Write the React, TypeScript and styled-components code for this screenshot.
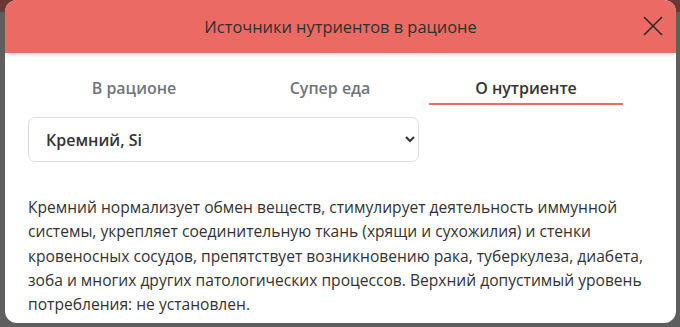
import React, { useState } from "react";
import styled, { createGlobalStyle } from "styled-components";

const GlobalStyle = createGlobalStyle`
  html, body {
    margin: 0;
    padding: 0;
    background: #5e5e5e;
    font-family: "Open Sans", "Noto Sans", sans-serif;
  }
`;

const tabs = ["В рационе", "Супер еда", "О нутриенте"];

function App() {
  const [active, setActive] = useState(2);

  return (
    <>
      <GlobalStyle />
      <Page>
        <TopBand />
        <Modal>
          <Header>
            <Title>Источники нутриентов в рационе</Title>
            <CloseButton aria-label="Закрыть">
              <svg width="22" height="22" viewBox="0 0 22 22">
                <path
                  d="M2 2 L20 20 M20 2 L2 20"
                  stroke="#2b2b2b"
                  strokeWidth="1.6"
                  fill="none"
                />
              </svg>
            </CloseButton>
          </Header>
          <Body>
            <TabRow>
              {tabs.map((t, i) => (
                <Tab key={t} $active={i === active} onClick={() => setActive(i)}>
                  {t}
                </Tab>
              ))}
            </TabRow>
            <Select defaultValue="si">
              <option value="si">Кремний, Si</option>
            </Select>
            <Description>
              Кремний нормализует обмен веществ, стимулирует деятельность иммунной
              системы, укрепляет соединительную ткань (хрящи и сухожилия) и стенки
              кровеносных сосудов, препятствует возникновению рака, туберкулеза,
              диабета, зоба и многих других патологических процессов. Верхний
              допустимый уровень потребления: не установлен.
            </Description>
          </Body>
        </Modal>
      </Page>
    </>
  );
}

export default App;

const Page = styled.div`
  position: relative;
  width: 680px;
  height: 327px;
  overflow: hidden;
  padding-left: 5px;
  box-sizing: border-box;
`;

const TopBand = styled.div`
  position: absolute;
  left: 0;
  top: 0;
  width: 100%;
  height: 12px;
  background: #6b3634;
`;

const Modal = styled.div`
  position: relative;
  width: 671px;
  height: 323px;
  background: #ffffff;
  border-radius: 12px;
  overflow: hidden;
  display: flex;
  flex-direction: column;
`;

const Header = styled.div`
  height: 53px;
  flex-shrink: 0;
  background: #ec6a64;
  display: flex;
  align-items: center;
  justify-content: center;
  position: relative;
  box-shadow: 0 2px 3px rgba(0, 0, 0, 0.12);
  z-index: 1;
`;

const Title = styled.h1`
  margin: 0;
  font-size: 16.4px;
  font-weight: 400;
  color: #2f2f2f;
`;

const CloseButton = styled.button`
  position: absolute;
  right: 12px;
  top: 15px;
  width: 22px;
  height: 22px;
  padding: 0;
  border: none;
  background: none;
  cursor: pointer;
  display: flex;
`;

const Body = styled.div`
  padding: 0 22px 0 23px;
  display: flex;
  flex-direction: column;
`;

const TabRow = styled.div`
  display: grid;
  grid-template-columns: repeat(3, 194px);
  column-gap: 2px;
  padding-left: 9px;
  margin-top: 23px;
`;

const Tab = styled.button<{ $active: boolean }>`
  height: 29px;
  border: none;
  background: none;
  padding: 0 0 4px;
  font-family: "Open Sans", sans-serif;
  font-size: 16px;
  font-weight: 600;
  color: ${(p) => (p.$active ? "#333333" : "#6f757b")};
  border-bottom: 2px solid ${(p) => (p.$active ? "#f06b66" : "transparent")};
  cursor: pointer;
`;

const Select = styled.select`
  margin-top: 12px;
  width: 391px;
  height: 45px;
  border: 1px solid #dedede;
  border-radius: 7px;
  padding: 0 10px 0 13px;
  font-family: "Open Sans", sans-serif;
  font-size: 16px;
  font-weight: 600;
  color: #333;
  background: #fff;
`;

const Description = styled.p`
  margin: 33px 0 0;
  font-size: 15.6px;
  line-height: 24.3px;
  color: #333;
`;
